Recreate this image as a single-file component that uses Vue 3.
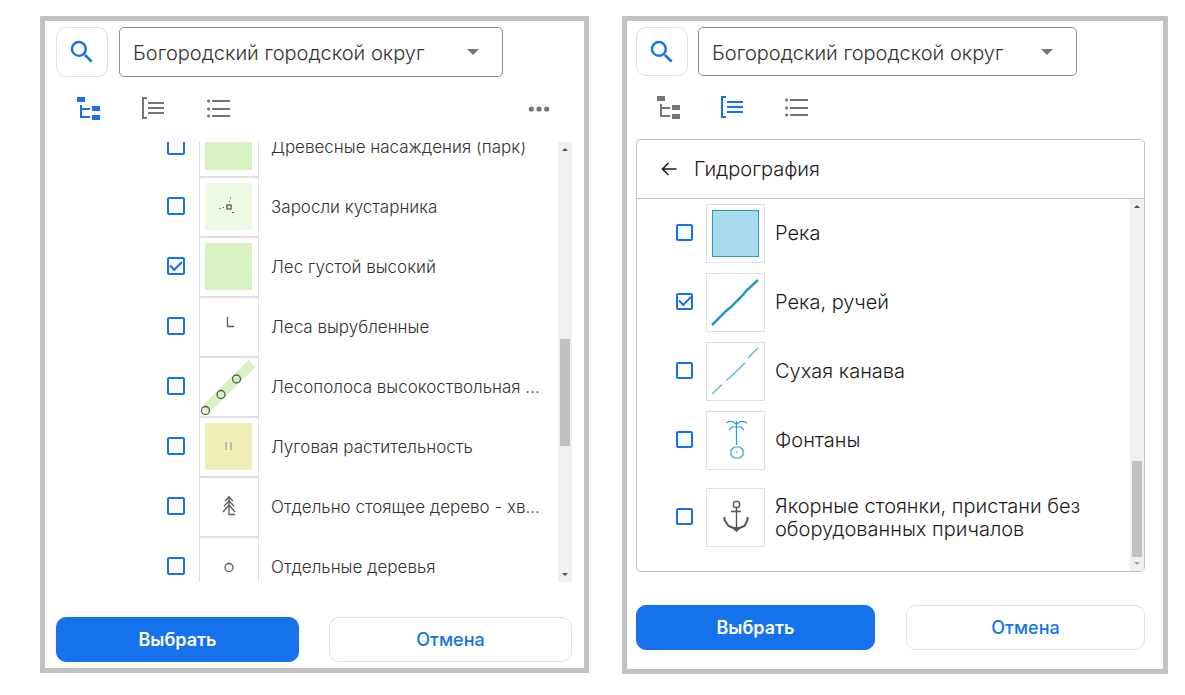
<template>
  <main class="page">
    <section class="panel">
      <div class="top">
        <button type="button" class="search" aria-label="Поиск">
          <svg width="30" height="30" viewBox="0 0 24 24"><path :d="searchPath" /></svg>
        </button>
        <div class="region">
          <select v-model="region" aria-label="Округ">
            <option>Богородский городской округ</option>
          </select>
          <svg class="arrow" width="12" height="6" viewBox="0 0 12 6"><path d="M0 0h12L6 6z" /></svg>
        </div>
      </div>

      <div class="toolbar">
        <button
          v-for="mode in modes"
          :key="mode.id"
          type="button"
          :class="['tool', { active: leftMode === mode.id }]"
          :aria-label="mode.label"
          @click="leftMode = mode.id"
        >
          <svg width="24" height="24" viewBox="0 0 24 24"><path :d="mode.path" /></svg>
        </button>
        <button type="button" class="tool more" aria-label="Ещё">
          <svg width="24" height="24" viewBox="0 0 24 24">
            <circle cx="4.3" cy="12" r="2.6" />
            <circle cx="12" cy="12" r="2.6" />
            <circle cx="19.7" cy="12" r="2.6" />
          </svg>
        </button>
      </div>

      <div class="scroll tree-scroll">
        <ul ref="treeList" class="tree">
          <li v-for="item in plants" :key="item.id">
            <input :id="item.id" v-model="item.checked" type="checkbox" />
            <svg class="thumb" width="60" height="60" viewBox="0 0 60 60">
              <rect v-if="item.fill" x="6" y="6" width="47" height="47" :fill="item.fill" />
              <g v-if="item.id === 'bush'" fill="#555">
                <rect x="28" y="28" width="4" height="4" fill="none" stroke="#555" stroke-width="1.3" />
                <rect x="24" y="30" width="1" height="1" />
                <rect x="20" y="31" width="2" height="1" opacity="0.6" />
                <rect x="30" y="24" width="1" height="1" />
                <rect x="31" y="20" width="1" height="2" opacity="0.6" />
                <rect x="33" y="35" width="2" height="1" />
              </g>
              <path v-else-if="item.id === 'cut'" d="M28.5 20v9.5H35" class="ink" />
              <g v-else-if="item.id === 'belt'">
                <path d="M6 53L53 6.5" stroke="#d9f0c1" stroke-width="10" />
                <g class="ink">
                  <circle cx="6.5" cy="53.5" r="4" />
                  <circle cx="22" cy="37.5" r="4" />
                  <circle cx="37.5" cy="22" r="4" />
                </g>
              </g>
              <path v-else-if="item.id === 'meadow'" d="M27 25v8M32 25v8" stroke="#bdbdae" stroke-width="2" />
              <path
                v-else-if="item.id === 'conifer'"
                d="M30 19v18.5h6M30 20l-4 4M30 20l4 4M30 24l-5 5M30 24l5 5M30 28l-6 7M30 28l6 7"
                class="ink"
              />
              <circle v-else-if="item.id === 'single'" cx="30" cy="30.5" r="4" class="ink" />
            </svg>
            <label :for="item.id">{{ item.name }}</label>
          </li>
        </ul>
        <div class="bar">
          <i class="up"></i>
          <div class="thumb-bar tree-thumb"></div>
          <i class="down"></i>
        </div>
      </div>

      <div class="actions">
        <button type="button" class="primary">Выбрать</button>
        <button type="button">Отмена</button>
      </div>
    </section>

    <section class="panel second">
      <div class="top">
        <button type="button" class="search" aria-label="Поиск">
          <svg width="30" height="30" viewBox="0 0 24 24"><path :d="searchPath" /></svg>
        </button>
        <div class="region">
          <select v-model="region" aria-label="Округ">
            <option>Богородский городской округ</option>
          </select>
          <svg class="arrow" width="12" height="6" viewBox="0 0 12 6"><path d="M0 0h12L6 6z" /></svg>
        </div>
      </div>

      <div class="toolbar">
        <button
          v-for="mode in modes"
          :key="mode.id"
          type="button"
          :class="['tool', { active: rightMode === mode.id }]"
          :aria-label="mode.label"
          @click="rightMode = mode.id"
        >
          <svg width="24" height="24" viewBox="0 0 24 24"><path :d="mode.path" /></svg>
        </button>
      </div>

      <div class="card">
        <header>
          <button type="button" class="back" aria-label="Назад">
            <svg width="16" height="14" viewBox="0 0 16 14"><path d="M15.5 7H1.5M7.5 1l-6 6l6 6" /></svg>
          </button>
          <h2>Гидрография</h2>
        </header>
        <div class="scroll group-scroll">
          <ul class="group">
            <li v-for="item in waters" :key="item.id">
              <input :id="item.id" v-model="item.checked" type="checkbox" />
              <svg class="thumb" width="59" height="59" viewBox="0 0 59 59">
                <rect v-if="item.id === 'river'" x="6.5" y="6.5" width="46" height="46" fill="#a8dbed" stroke="#2a98c5" />
                <path
                  v-else-if="item.id === 'stream'"
                  d="M6 52L20 38l5-4L37 22l3-4L52 7"
                  fill="none"
                  stroke="#2a98c5"
                  stroke-width="2.5"
                />
                <path
                  v-else-if="item.id === 'ditch'"
                  d="M6 52l10-9.500M20 38.500l4-3L39 21M42 16L52 6"
                  fill="none"
                  stroke="#5ab4d8"
                  stroke-width="1.3"
                />
                <g v-else-if="item.id === 'fountain'" fill="none" stroke="#2a9dcc" stroke-width="1.2">
                  <path d="M30.5 10v24M20 12l3-1.500h4l3.500 3l3.500-3h4l3 1.500M23 19l3-3h9l3 3" />
                  <path d="M28 36h6l3 3v5l-3 3h-6l-3-3v-5z" />
                  <path d="M30 41h2" />
                </g>
                <g v-else fill="none" stroke="#555" stroke-width="1.4">
                  <rect x="27.5" y="13.5" width="6" height="6" rx="2" />
                  <path d="M30.5 20v23M25 23.5h10" />
                  <path d="M18.5 29v3l4 6l5 2h6l5-2l3-6v-3" stroke-width="2" />
                  <path d="M27 40h7l-3.500 3z" fill="#555" />
                </g>
              </svg>
              <label :for="item.id">{{ item.name }}</label>
            </li>
          </ul>
          <div class="bar">
            <i class="up"></i>
            <div class="thumb-bar group-thumb"></div>
            <i class="down muted"></i>
          </div>
        </div>
      </div>

      <div class="actions">
        <button type="button" class="primary">Выбрать</button>
        <button type="button">Отмена</button>
      </div>
    </section>
  </main>
</template>

<script setup>
import { onMounted, ref } from 'vue';

const region = ref('Богородский городской округ');
const leftMode = ref('tree');
const rightMode = ref('groups');
const treeList = ref(null);

const searchPath = 'M15.5 14h-.79l-.28-.27A6.471 6.471 0 0 0 16 9.5 6.5 6.5 0 1 0 9.5 16c1.61 0 3.09-.59 4.23-1.57l.27.28v.79l5 4.99L20.49 19l-4.99-5zm-6 0C7.01 14 5 11.99 5 9.5S7.01 5 9.5 5 14 7.01 14 9.5 11.99 14 9.5 14z';

const modes = [
  { id: 'tree', label: 'Дерево', path: 'M0 0h8v5H0zM3 8h2v3h5v2H5v6h5v2H3zM10 11h3v2h-3zM10 19h3v2h-3zM15 9h8v5h-8zM15 18h8v5h-8z' },
  { id: 'groups', label: 'Группы', path: 'M0 0h5v2H2v18h3v2H0zM6 5h16v2H6zM6 10h16v2H6zM6 15h16v2H6z' },
  {
    id: 'list',
    label: 'Список',
    path: 'M5 3h18v2H5zM5 11h18v2H5zM5 18h18v2H5zM0 4a1.600 1.600 0 1 0 3.200 0a1.600 1.600 0 1 0-3.200 0M0 12a1.600 1.600 0 1 0 3.200 0a1.600 1.600 0 1 0-3.200 0M0 19a1.600 1.600 0 1 0 3.200 0a1.600 1.600 0 1 0-3.200 0',
  },
];

const plants = ref([
  { id: 'park', name: 'Древесные насаждения (парк)', checked: false, fill: '#d9f0c1' },
  { id: 'bush', name: 'Заросли кустарника', checked: false, fill: '#eef9e4' },
  { id: 'forest', name: 'Лес густой высокий', checked: true, fill: '#d9f0c1' },
  { id: 'cut', name: 'Леса вырубленные', checked: false },
  { id: 'belt', name: 'Лесополоса высокоствольная ...', checked: false },
  { id: 'meadow', name: 'Луговая растительность', checked: false, fill: '#efeeb6' },
  { id: 'conifer', name: 'Отдельно стоящее дерево - хв...', checked: false },
  { id: 'single', name: 'Отдельные деревья', checked: false },
]);

const waters = ref([
  { id: 'river', name: 'Река', checked: false },
  { id: 'stream', name: 'Река, ручей', checked: true },
  { id: 'ditch', name: 'Сухая канава', checked: false },
  { id: 'fountain', name: 'Фонтаны', checked: false },
  { id: 'anchor', name: 'Якорные стоянки, пристани без оборудованных причалов', checked: false },
]);

onMounted(() => {
  treeList.value.scrollTop = 25;
});
</script>

<style>
body {
  margin: 0;
  background: #fff;
}
</style>

<style scoped>
* {
  box-sizing: border-box;
}

.page {
  display: grid;
  grid-template-columns: 549fr 546fr;
  align-items: start;
  gap: 33px;
  padding: 16px 17px 20px 40px;
  font-family: Inter, "Noto Sans", sans-serif;
  font-weight: 300;
  color: #333;
}

.panel {
  min-width: 0;
  border: 5px solid #c2c2c2;
  padding: 6px 12px 6px 11px;
}

.second {
  padding: 6px 18px 19px 9px;
}

button {
  font: inherit;
  cursor: pointer;
}

.top {
  display: flex;
  gap: 11px;
  padding-right: 69px;
}

.second .top {
  gap: 10px;
  padding-right: 68px;
}

.search {
  display: flex;
  align-items: center;
  justify-content: center;
  flex: none;
  width: 52px;
  height: 50px;
  padding: 0;
  background: #fff;
  border: 1px solid #e2e2e2;
  border-radius: 10px;
}

.search svg {
  fill: #1672ec;
}

.region {
  position: relative;
  flex: 1;
}

.region select {
  width: 100%;
  height: 50px;
  padding: 2px 40px 0 13px;
  appearance: none;
  background: #fff;
  border: 1px solid #8f8f8f;
  border-radius: 5px;
  font: inherit;
  font-size: 20px;
  color: #333;
}

.second .search,
.second .region select {
  height: 49px;
}

.arrow {
  position: absolute;
  right: 24px;
  top: 22px;
  fill: #757575;
  pointer-events: none;
}

.toolbar {
  display: flex;
  gap: 41px;
  padding: 20px 21px 21px;
}

.second .toolbar {
  gap: 40px;
  padding: 20px 21px 19px;
}

.tool {
  display: flex;
  padding: 0;
  border: 0;
  background: none;
}

.tool svg {
  fill: #757575;
}

.tool.active svg {
  fill: #1672ec;
}

.more {
  margin-left: auto;
}

.scroll {
  display: flex;
}

.tree-scroll {
  height: 440px;
}

.group-scroll {
  height: 372px;
}

ul {
  flex: 1;
  min-width: 0;
  margin: 0;
  padding: 0;
  overflow: hidden;
  list-style: none;
}

li {
  display: flex;
  align-items: center;
}

.tree li {
  padding-left: 111px;
  font-size: 17px;
}

.tree label {
  margin-left: 12px;
  white-space: nowrap;
}

.group li {
  padding: 5px 30px 5px 39px;
  font-size: 20px;
  line-height: 23px;
  color: #1c1c1c;
}

.group li:last-child {
  padding-top: 13px;
}

.group label {
  margin-left: 10px;
}

input[type="checkbox"] {
  display: flex;
  align-items: center;
  justify-content: center;
  flex: none;
  width: 18px;
  height: 18px;
  margin: 0 14px 3px 0;
  appearance: none;
  background: #fff;
  border: 2px solid #1672ec;
  border-radius: 2px;
}

.group input[type="checkbox"] {
  width: 17px;
  height: 17px;
  margin-right: 13px;
}

input[type="checkbox"]:checked::after {
  content: "";
  width: 10px;
  height: 5px;
  margin-bottom: 3px;
  border: solid #1672ec;
  border-width: 0 0 2px 2px;
  transform: rotate(-45deg);
}

.thumb {
  flex: none;
  outline: 1px solid #e0e0e0;
  outline-offset: -1px;
}

.ink {
  fill: none;
  stroke: #5c5c5c;
  stroke-width: 1.3;
}

.bar {
  display: flex;
  flex-direction: column;
  align-items: center;
  flex: none;
  width: 14px;
  padding: 6px 0;
  background: #f0f0f0;
}

.up,
.down {
  border: 3px solid transparent;
  border-top: 0;
  border-bottom: 3px solid #4f4f4f;
}

.down {
  margin-top: auto;
  border-top: 3px solid #4f4f4f;
  border-bottom: 0;
}

.muted {
  border-top-color: #a3a3a3;
}

.thumb-bar {
  width: 10px;
  background: #c1c1c1;
}

.tree-thumb {
  height: 107px;
  margin-top: 188px;
}

.group-thumb {
  height: 96px;
  margin-top: 253px;
}

.card {
  overflow: hidden;
  border: 1px solid #c2c2c2;
  border-radius: 5px;
}

.card header {
  display: flex;
  align-items: center;
  gap: 17px;
  height: 59px;
  padding-left: 24px;
  border-bottom: 1px solid #c2c2c2;
  color: #1c1c1c;
}

.back {
  display: flex;
  padding: 0;
  border: 0;
  background: none;
}

.back svg {
  fill: none;
  stroke: #1c1c1c;
  stroke-width: 1.6;
}

h2 {
  margin: 0;
  font-size: 20px;
  font-weight: 300;
}

.actions {
  display: grid;
  grid-template-columns: 1fr 1fr;
  gap: 30px;
  margin-top: 35px;
}

.second .actions {
  gap: 31px;
  margin-top: 33px;
}

.actions button {
  height: 45px;
  background: #fff;
  border: 1px solid #e2e2e2;
  border-radius: 10px;
  font-size: 18px;
  font-weight: 500;
  color: #1672ec;
}

.actions .primary {
  background: #1672ec;
  border-color: #1672ec;
  font-weight: 600;
  color: #fff;
}
</style>
